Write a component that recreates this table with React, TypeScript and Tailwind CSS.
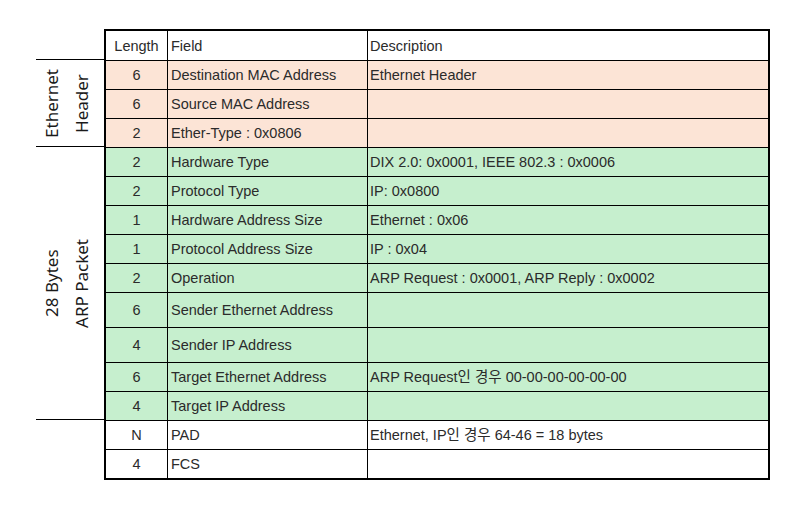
import React from "react";

type Row = { len: string; field: string; desc?: string; bg: string; h: string };

const PEACH = "bg-[#fce4d6]";
const GREEN = "bg-[#c6efce]";
const WHITE = "bg-white";

const rows: Row[] = [
  { len: "Length", field: "Field", desc: "Description", bg: WHITE, h: "h-[30px]" },
  { len: "6", field: "Destination MAC Address", desc: "Ethernet Header", bg: PEACH, h: "h-[29px]" },
  { len: "6", field: "Source MAC Address", bg: PEACH, h: "h-[29px]" },
  { len: "2", field: "Ether-Type : 0x0806", bg: PEACH, h: "h-[29px]" },
  { len: "2", field: "Hardware Type", desc: "DIX 2.0: 0x0001, IEEE 802.3 : 0x0006", bg: GREEN, h: "h-[29px]" },
  { len: "2", field: "Protocol Type", desc: "IP: 0x0800", bg: GREEN, h: "h-[29px]" },
  { len: "1", field: "Hardware Address Size", desc: "Ethernet : 0x06", bg: GREEN, h: "h-[29px]" },
  { len: "1", field: "Protocol Address Size", desc: "IP : 0x04", bg: GREEN, h: "h-[29px]" },
  { len: "2", field: "Operation", desc: "ARP Request : 0x0001, ARP Reply : 0x0002", bg: GREEN, h: "h-[29px]" },
  { len: "6", field: "Sender Ethernet Address", bg: GREEN, h: "h-[35px]" },
  { len: "4", field: "Sender IP Address", bg: GREEN, h: "h-[35px]" },
  { len: "6", field: "Target Ethernet Address", desc: "ARP Request인 경우 00-00-00-00-00-00", bg: GREEN, h: "h-[29px]" },
  { len: "4", field: "Target IP Address", bg: GREEN, h: "h-[29px]" },
  { len: "N", field: "PAD", desc: "Ethernet, IP인 경우 64-46 = 18 bytes", bg: WHITE, h: "h-[29px]" },
  { len: "4", field: "FCS", bg: WHITE, h: "h-[28px]" },
];

export default function App() {
  return (
    <div className="w-[807px] h-[508px] bg-white pt-[29px] pl-[36px]">
      <div className="flex">
        {/* left labels */}
        <div className="w-[68px] pt-[30px] font-['Noto_Sans','Open_Sans',sans-serif] text-[17px] text-[#1a1a1a]">
          <div className="h-[88px] border-y border-black flex items-center justify-center pr-[6px]">
            <div className="[writing-mode:vertical-rl] rotate-180 leading-[30px] text-center">
              Ethernet
              <br />
              Header
            </div>
          </div>
          <div className="h-[273px] border-b border-black flex items-center justify-center pr-[6px]">
            <div className="[writing-mode:vertical-rl] rotate-180 leading-[30px] text-center">
              28 Bytes
              <br />
              ARP Packet
            </div>
          </div>
        </div>
        {/* table */}
        <div className="w-[666px] border-2 border-black font-['Liberation_Sans','Noto_Sans_CJK_KR',sans-serif] text-[14.5px] text-[#2b2b2b]">
          {rows.map((r, i) => (
            <div
              key={i}
              className={`flex box-border ${r.h} ${r.bg} ${i < rows.length - 1 ? "border-b border-black" : ""}`}
            >
              <div className="w-[62px] border-r border-black flex items-center justify-center pt-[2px]">{r.len}</div>
              <div className="w-[200px] border-r border-black flex items-center pl-[3px] pt-[2px] whitespace-nowrap">{r.field}</div>
              <div className="flex-1 flex items-center pl-[2px] pt-[2px] whitespace-nowrap">{r.desc ?? ""}</div>
            </div>
          ))}
        </div>
      </div>
    </div>
  );
}
